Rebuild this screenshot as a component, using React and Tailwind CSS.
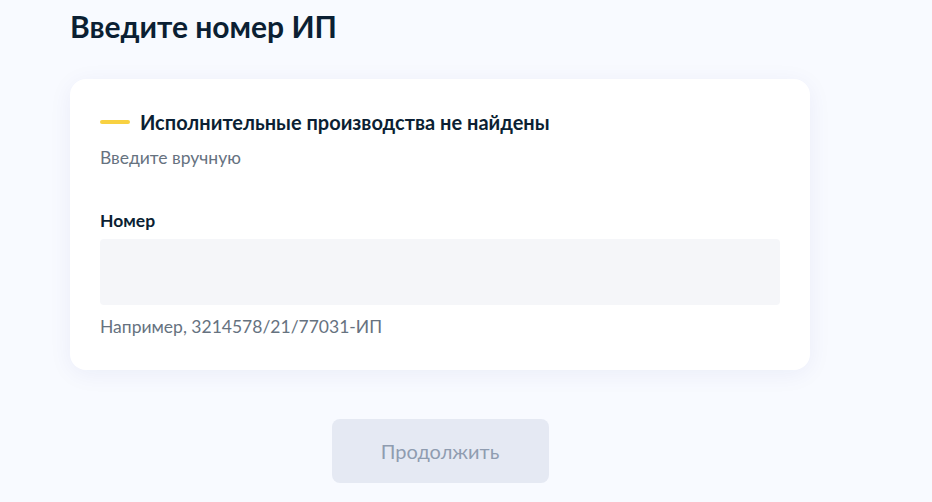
import React from 'react';

const App = () => {
  return (
    <div
      className="min-h-[502px] w-full bg-[#f8faff] pl-[70px] pt-[8px] text-[#0b1f33]"
      style={{ fontFamily: 'Lato, "Noto Sans", sans-serif' }}
    >
      <div className="w-[740px]">
        {/* Заголовок */}
        <h1 className="text-[30px] font-bold leading-[36px]">Введите номер ИП</h1>

        {/* Карточка */}
        <div className="mt-[35px] rounded-[16px] bg-white px-[30px] pt-[31px] pb-[31px] shadow-[0_4px_24px_rgba(0,35,130,0.06)]">
          <div className="flex items-center gap-[10px]">
            <span className="block h-[4px] w-[30px] rounded-full bg-[#f8d141]"></span>
            <span className="text-[20px] font-bold leading-[24px]">
              Исполнительные производства не найдены
            </span>
          </div>
          <p className="mt-[12px] text-[17.5px] leading-[24px] text-[#66727f]">Введите вручную</p>

          <label className="mt-[39px] block text-[17.5px] font-bold leading-[24px]">Номер</label>
          <input
            type="text"
            className="mt-[6px] block h-[66px] w-full rounded-[4px] bg-[#f5f6f9] px-4 outline-none"
          />
          <p className="mt-[10px] text-[17.5px] leading-[24px] text-[#66727f]">
            Например, 3214578/21/77031-ИП
          </p>
        </div>

        {/* Кнопка */}
        <div className="mt-[49px] flex justify-center">
          <button
            disabled
            className="h-[64px] w-[217px] rounded-[8px] bg-[#e5e9f3] text-[20px] text-[#8f9cb0]"
          >
            Продолжить
          </button>
        </div>
      </div>
    </div>
  );
};

export default App;
